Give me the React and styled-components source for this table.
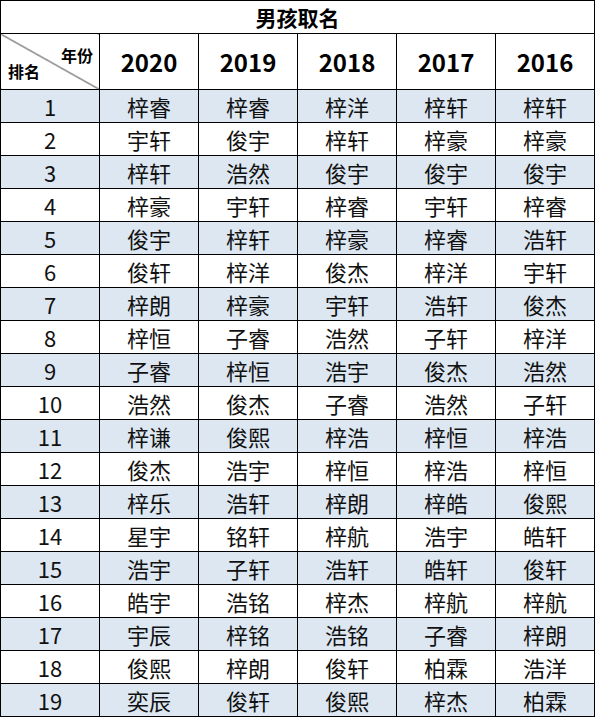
import React from "react"
import styled, { createGlobalStyle } from "styled-components"

const GlobalStyle = createGlobalStyle`
  body {
    margin: 0;
    background: #fff;
    font-family: "Noto Sans CJK SC", "Noto Sans", sans-serif;
    color: #000;
  }
`

const Table = styled.table`
  width: 595px;
  border-collapse: collapse;
  table-layout: fixed;
  border: 1px solid #000;
`

const TitleCell = styled.th`
  height: 32px;
  padding: 0;
  border: 1px solid #000;
  font-size: 21px;
  font-weight: 700;
  line-height: 1;
  text-align: center;
  vertical-align: middle;
`

const CornerCell = styled.th`
  height: 55px;
  padding: 0;
  border: 1px solid #000;
  background: linear-gradient(
    to top right,
    transparent calc(50% - 0.8px),
    #222 50%,
    transparent calc(50% + 0.8px)
  );
`

const CornerInner = styled.div`
  display: flex;
  flex-direction: column;
  height: 55px;
  padding: 13px 6px 10px 7px;
  box-sizing: border-box;
  font-size: 16px;
  font-weight: 700;
  line-height: 1;
`

const CornerTop = styled.span`
  align-self: flex-end;
`

const CornerBottom = styled.span`
  margin-top: auto;
  align-self: flex-start;
`

const YearCell = styled.th`
  padding: 0;
  border: 1px solid #000;
  font-size: 24px;
  font-weight: 700;
  text-align: center;
  vertical-align: middle;
`

const Row = styled.tr`
  background: ${(p) => (p.$striped ? "#dde7f2" : "#fff")};
`

const Cell = styled.td`
  height: 32px;
  padding: 0;
  border: 1px solid #000;
  font-size: 22px;
  line-height: 1;
  text-align: center;
  vertical-align: middle;
  color: #111;
`

const years = ["2020", "2019", "2018", "2017", "2016"]

const rows = [
  ["梓睿", "梓睿", "梓洋", "梓轩", "梓轩"],
  ["宇轩", "俊宇", "梓轩", "梓豪", "梓豪"],
  ["梓轩", "浩然", "俊宇", "俊宇", "俊宇"],
  ["梓豪", "宇轩", "梓睿", "宇轩", "梓睿"],
  ["俊宇", "梓轩", "梓豪", "梓睿", "浩轩"],
  ["俊轩", "梓洋", "俊杰", "梓洋", "宇轩"],
  ["梓朗", "梓豪", "宇轩", "浩轩", "俊杰"],
  ["梓恒", "子睿", "浩然", "子轩", "梓洋"],
  ["子睿", "梓恒", "浩宇", "俊杰", "浩然"],
  ["浩然", "俊杰", "子睿", "浩然", "子轩"],
  ["梓谦", "俊熙", "梓浩", "梓恒", "梓浩"],
  ["俊杰", "浩宇", "梓恒", "梓浩", "梓恒"],
  ["梓乐", "浩轩", "梓朗", "梓皓", "俊熙"],
  ["星宇", "铭轩", "梓航", "浩宇", "皓轩"],
  ["浩宇", "子轩", "浩轩", "皓轩", "俊轩"],
  ["皓宇", "浩铭", "梓杰", "梓航", "梓航"],
  ["宇辰", "梓铭", "浩铭", "子睿", "梓朗"],
  ["俊熙", "梓朗", "俊轩", "柏霖", "浩洋"],
  ["奕辰", "俊轩", "俊熙", "梓杰", "柏霖"],
]

export default function App() {
  return (
    <>
      <GlobalStyle />
      <Table>
        <thead>
          <tr>
            <TitleCell colSpan={6}>男孩取名</TitleCell>
          </tr>
          <tr>
            <CornerCell>
              <CornerInner>
                <CornerTop>年份</CornerTop>
                <CornerBottom>排名</CornerBottom>
              </CornerInner>
            </CornerCell>
            {years.map((y) => (
              <YearCell key={y}>{y}</YearCell>
            ))}
          </tr>
        </thead>
        <tbody>
          {rows.map((names, i) => (
            <Row key={i} $striped={i % 2 === 0}>
              <Cell>{i + 1}</Cell>
              {names.map((n, j) => (
                <Cell key={j}>{n}</Cell>
              ))}
            </Row>
          ))}
        </tbody>
      </Table>
    </>
  )
}
